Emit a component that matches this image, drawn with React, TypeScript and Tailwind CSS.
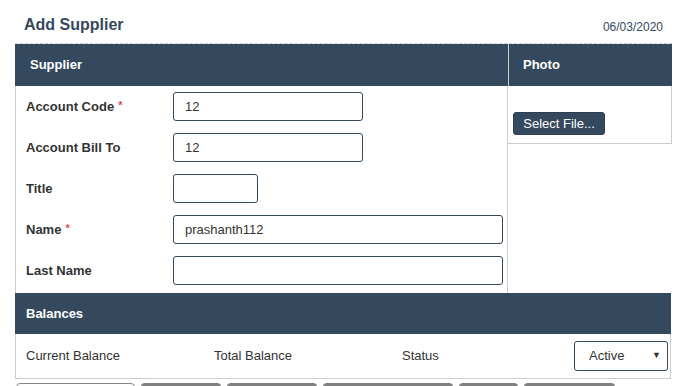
import React from "react";

const F = { fontFamily: '"Liberation Sans", Arial, sans-serif' };

function Row({ label, req, w, value }: { label: string; req?: boolean; w: string; value?: string }) {
  return (
    <div className="flex items-center h-[29px]">
      <div className="w-[157px] pl-[10px] text-[13px] font-bold text-[#333]">
        {label}
        {req && <span className="text-[#e0475a] ml-[4px] text-[11px] align-top">*</span>}
      </div>
      <div
        className={`${w} h-[29px] border border-[#34495e] rounded-[3px] flex items-center pl-[11px] text-[13px] text-[#333]`}
      >
        {value}
      </div>
    </div>
  );
}

export default function App() {
  return (
    <div style={F} className="w-[687px] h-[386px] overflow-hidden bg-white">
      <div className="flex items-end justify-between h-[43px] pl-[24px] pr-[24px] pb-[10px]">
        <div className="text-[16px] font-bold text-[#34495e] leading-none">Add Supplier</div>
        <div className="text-[12px] text-[#34495e] leading-none">06/03/2020</div>
      </div>
      <div className="ml-[15px] w-[657px] border-t border-dashed border-[#ccc] flex items-start">
        <div className="w-[493px]">
          <div className="h-[42px] bg-[#34495e] flex items-center pl-[15px] text-[13px] font-bold text-white">
            Supplier
          </div>
          <div className="border-l border-r border-[#ccc] pt-[6px] pb-[8px] flex flex-col gap-[12px]">
            <Row label="Account Code" req w="w-[190px]" value="12" />
            <Row label="Account Bill To" w="w-[190px]" value="12" />
            <Row label="Title" w="w-[85px]" />
            <Row label="Name" req w="w-[330px]" value="prashanth112" />
            <Row label="Last Name" w="w-[330px]" />
          </div>
        </div>
        <div className="flex-1">
          <div className="h-[42px] bg-[#34495e] flex items-center pl-[14px] text-[13px] font-bold text-white border-l border-[#ccc]">
            Photo
          </div>
          <div className="h-[58px] border-r border-b border-[#ccc] pl-[5px] pt-[26px]">
            <div className="w-[92px] h-[23px] bg-[#34495e] rounded-[3px] border border-[#2c3e50] flex items-center justify-center text-[13px] text-white">
              Select File...
            </div>
          </div>
        </div>
      </div>
      <div className="ml-[15px] w-[656px]">
        <div className="h-[41px] bg-[#34495e] flex items-center pl-[11px] text-[13px] font-bold text-white">
          Balances
        </div>
        <div className="h-[45px] border-l border-r border-b border-[#ccc] flex items-center text-[13px] text-[#333]">
          <div className="w-[198px] pl-[10px]">Current Balance</div>
          <div className="w-[188px]">Total Balance</div>
          <div className="w-[172px]">Status</div>
          <div className="w-[94px] h-[30px] border border-[#34495e] rounded-[3px] flex items-center justify-between pl-[14px] pr-[6px] text-[13px] text-[#333]">
            <span>Active</span>
            <span className="text-[9px]">▼</span>
          </div>
        </div>
      </div>
      <div className="flex gap-[6px] ml-[16px] mt-[4px]">
        <div className="w-[119px] h-[20px] border border-[#888] bg-white rounded-t-[4px]" />
        <div className="w-[80px] h-[20px] bg-[#808080] rounded-t-[4px]" />
        <div className="w-[90px] h-[20px] bg-[#808080] rounded-t-[4px]" />
        <div className="w-[130px] h-[20px] bg-[#808080] rounded-t-[4px]" />
        <div className="w-[59px] h-[20px] bg-[#808080] rounded-t-[4px]" />
        <div className="w-[91px] h-[20px] bg-[#808080] rounded-t-[4px]" />
      </div>
    </div>
  );
}
